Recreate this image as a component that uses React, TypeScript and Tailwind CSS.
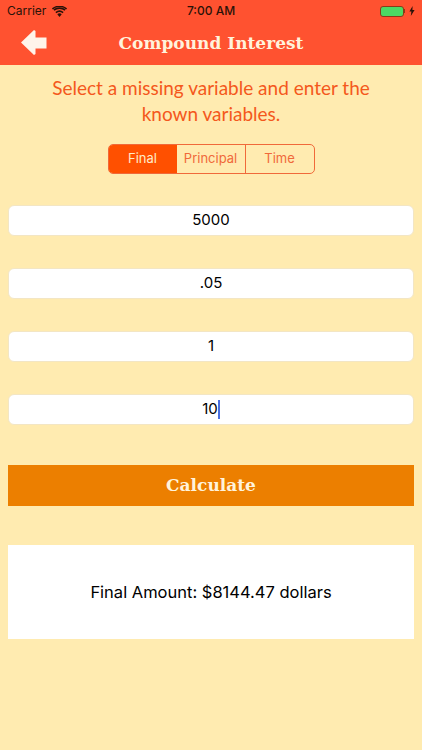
const sans = "font-['Inter','Liberation_Sans',sans-serif]"
const serif = "font-['DejaVu_Serif',serif]"

function Field({ value, caret }: { value: string; caret?: boolean }) {
  return (
    <div className={`h-[31px] rounded-[6px] bg-white border border-[#f3e6c4] flex items-center justify-center text-[15px] text-black ${sans}`}>
      <span>{value}</span>
      {caret && <span className="w-[2px] h-[19px] bg-[#4a6fe0]" />}
    </div>
  )
}

export default function App() {
  return (
    <div className="w-[422px] h-[750px] bg-[#ffebb0] flex flex-col overflow-hidden">
      {/* Status + nav bar */}
      <div className="h-[65px] bg-[#ff5230] shrink-0 flex flex-col">
        <div className={`h-[22px] px-[7px] flex items-center justify-between text-[12px] text-[#2a1208] ${sans}`}>
          <div className="w-[100px] flex items-center gap-[6px]">
            <span>Carrier</span>
            <svg width="15" height="11" viewBox="0 0 15 11">
              <path d="M7.500 11 5.300 8.300a3.400 3.400 0 0 1 4.400 0z" fill="#2a1208" />
              <path d="M3.900 6.600a5.600 5.600 0 0 1 7.200 0M1.900 4.200a8.700 8.700 0 0 1 11.200 0M0.600 2.300" fill="none" stroke="#2a1208" strokeWidth="1.700" />
              <path d="M0.400 2.900a11 11 0 0 1 14.200 0" fill="none" stroke="#2a1208" strokeWidth="1.500" />
            </svg>
          </div>
          <span className="font-medium">7:00 AM</span>
          <div className="w-[100px] flex items-center justify-end gap-[2px]">
            <div className="w-[24px] h-[11px] rounded-[3px] border border-[#8a3a18] bg-[#4cd964]" />
            <div className="w-px h-[4px] bg-[#8a3a18] -ml-[2px]" />
            <svg className="ml-[2px]" width="6" height="10" viewBox="0 0 6 10"><path d="M3.600 0 0.400 5.600h2L1.800 10 5.600 4H3.400z" fill="#2a1208" /></svg>
          </div>
        </div>
        <div className="relative flex-1 flex items-center justify-center">
          <svg className="absolute left-[20px] top-[7px]" width="27" height="27" viewBox="0 0 27 27">
            <path d="M1 13.500 14 1l1.500 1v6.500H26.500v11H15.500V25l-1.500 1z" fill="#fff4ea" />
          </svg>
          <span className={`text-[17px] font-bold text-[#fff3dc] ${serif}`}>Compound Interest</span>
        </div>
      </div>

      <p className="mt-[10px] px-4 text-center text-[19px] leading-[26px] text-[#f4581c] font-['Lato',sans-serif]">
        Select a missing variable and enter the
        <br />
        known variables.
      </p>

      {/* Segmented control */}
      <div className={`mt-[17px] self-center w-[207px] h-[30px] flex rounded-[5px] border border-[#f0693a] overflow-hidden text-[13px] ${sans}`}>
        <div className="flex-1 flex items-center justify-center bg-[#ff5000] text-[#ffebc8]">Final</div>
        <div className="flex-1 flex items-center justify-center border-r border-[#f0693a] text-[#f0693a]">Principal</div>
        <div className="flex-1 flex items-center justify-center border-l border-[#f0693a] -ml-px text-[#f0693a]">Time</div>
      </div>

      <div className="mt-[31px] px-[8px] flex flex-col gap-[32px]">
        <Field value="5000" />
        <Field value=".05" />
        <Field value="1" />
        <Field value="10" caret />
      </div>

      <div className="mt-[40px] mx-[8px] h-[41px] bg-[#ec7f00] flex items-center justify-center">
        <span className={`text-[17px] font-bold text-[#fff3dc] ${serif}`}>Calculate</span>
      </div>

      <div className={`mt-[39px] mx-[8px] h-[94px] bg-white flex items-center justify-center text-[16.500px] text-black ${sans}`}>
        Final Amount: $8144.47 dollars
      </div>
    </div>
  )
}
